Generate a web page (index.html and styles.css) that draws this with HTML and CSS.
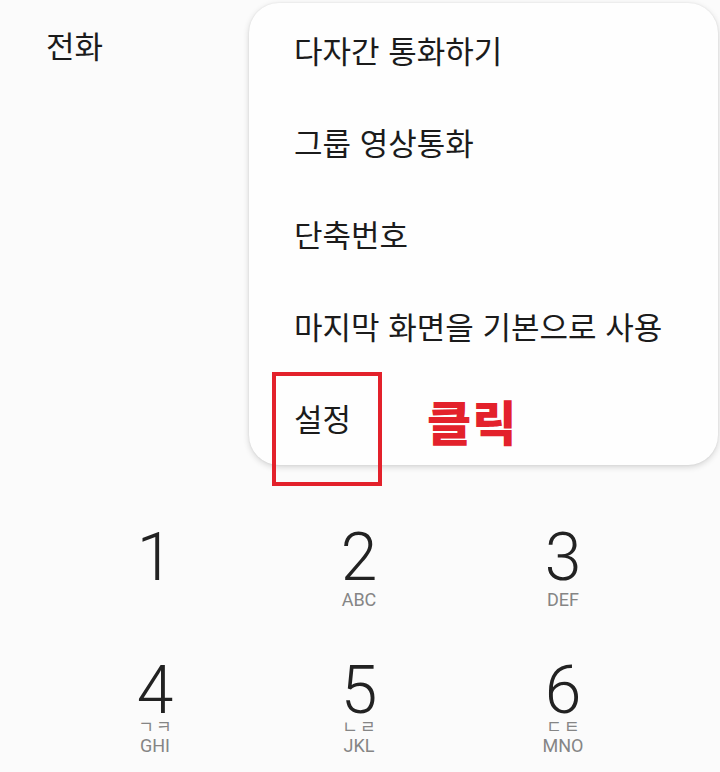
FILE: index.html
```html
<!DOCTYPE html>
<html lang="ko">
<head>
<meta charset="utf-8">
<title>전화</title>
<link rel="stylesheet" href="styles.css">
</head>
<body>
<div class="screen">
  <header class="header">
    <h1 class="title">전화</h1>
  </header>
  <div class="display"></div>
  <div class="dialpad">
    <div class="key"><span class="digit">1</span></div>
    <div class="key"><span class="digit">2</span><span class="letters">ABC</span></div>
    <div class="key"><span class="digit">3</span><span class="letters">DEF</span></div>
    <div class="key"><span class="digit">4</span><span class="jamo">ㄱㅋ</span><span class="letters">GHI</span></div>
    <div class="key"><span class="digit">5</span><span class="jamo">ㄴㄹ</span><span class="letters">JKL</span></div>
    <div class="key"><span class="digit">6</span><span class="jamo">ㄷㅌ</span><span class="letters">MNO</span></div>
  </div>

  <ul class="menu">
    <li class="menu-item">다자간 통화하기</li>
    <li class="menu-item">그룹 영상통화</li>
    <li class="menu-item">단축번호</li>
    <li class="menu-item">마지막 화면을 기본으로 사용</li>
    <li class="menu-item">설정</li>
  </ul>

  <div class="highlight"></div>
  <div class="callout">클릭</div>
</div>
</body>
</html>
```

FILE: styles.css
```css
* { box-sizing: border-box; }
html, body { margin: 0; padding: 0; }
body {
  background: #fbfbfb;
  font-family: "Noto Sans CJK KR", "Noto Sans", sans-serif;
  color: #1b1b1b;
}
.screen {
  position: relative;
  width: 720px;
  height: 772px;
  overflow: hidden;
}
.header {
  height: 90px;
  padding: 29px 0 0 46px;
}
.title {
  margin: 0;
  font-size: 31px;
  line-height: 31px;
  font-weight: 400;
}
.display { height: 440px; }

.dialpad {
  display: grid;
  grid-template-columns: repeat(3, 204px);
  grid-auto-rows: 133px;
  padding-left: 53px;
}
.key {
  display: flex;
  flex-direction: column;
  align-items: center;
}
.digit {
  font-family: Roboto, "Noto Sans", sans-serif;
  font-weight: 300;
  font-size: 66px;
  line-height: 56px;
  color: #222;
}
.letters {
  margin-top: 5px;
  font-family: Roboto, "Noto Sans", sans-serif;
  font-size: 18px;
  line-height: 18px;
  color: #858585;
}
.jamo {
  font-size: 17px;
  line-height: 13px;
  letter-spacing: 2px;
  padding-left: 2px;
  color: #858585;
}

.menu {
  position: absolute;
  left: 249px;
  top: 3px;
  width: 469px;
  margin: 0;
  padding: 0 0 2px 0;
  list-style: none;
  background: #fefefe;
  border-radius: 30px;
  box-shadow: 0 2px 6px rgba(0,0,0,0.16), 0 0 2px rgba(0,0,0,0.08);
}
.menu-item {
  height: 92px;
  display: flex;
  align-items: center;
  padding-left: 45px;
  font-size: 31px;
  color: #1b1b1b;
}

.highlight {
  position: absolute;
  left: 272px;
  top: 372px;
  width: 110px;
  height: 114px;
  border: 4px solid #e3212b;
}
.callout {
  position: absolute;
  left: 427px;
  top: 390px;
  font-size: 48px;
  line-height: 60px;
  letter-spacing: 1px;
  font-weight: 900;
  color: #e3212b;
}
```
